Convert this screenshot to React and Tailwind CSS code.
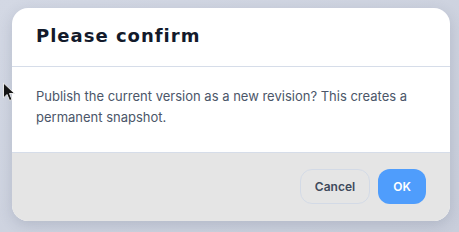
export default function App() {
  return (
    <div className="relative h-[232px] w-[459px] overflow-hidden bg-gradient-to-br from-[#d3d8e4] to-[#c9cedb] px-3 pt-2 font-['Inter',sans-serif]">
      {/* mouse cursor */}
      <svg className="absolute left-[2px] top-[82px]" width="14" height="20" viewBox="0 0 14 20">
        <path d="M1.5 1 L1.5 16 L5 12.5 L7.5 18.5 L10 17.5 L7.5 11.5 L12.5 11.5 Z" fill="#151515" stroke="#e8e8e8" strokeWidth="1" strokeLinejoin="round" />
      </svg>

      <div className="flex h-[213px] w-[438px] flex-col overflow-hidden rounded-2xl bg-white shadow-[0_4px_14px_rgba(60,70,100,0.18)]">
        <div className="flex h-[59px] items-center border-b border-[#d6dde9] px-6 pb-1">
          <h1 className="font-['DejaVu_Sans',sans-serif] text-[18px] font-bold tracking-[1px] text-[#131a2b]">
            Please confirm
          </h1>
        </div>

        <div className="h-[85px] px-6 pt-[19px]">
          <p className="text-[13px] leading-[21px] text-[#4b5669]">
            Publish the current version as a new revision? This creates a permanent snapshot.
          </p>
        </div>

        <div className="flex flex-1 items-start justify-end gap-2 border-t border-[#d6dde9] bg-[#e5e5e5] px-6 pt-4">
          <button className="h-[35px] w-[70px] rounded-xl border border-[#d3dae6] text-[12px] font-semibold text-[#3f4a5c]">
            Cancel
          </button>
          <button className="h-[35px] w-[48px] rounded-xl bg-[#4f9dfc] text-[12px] font-semibold text-white">
            OK
          </button>
        </div>
      </div>
    </div>
  );
}
